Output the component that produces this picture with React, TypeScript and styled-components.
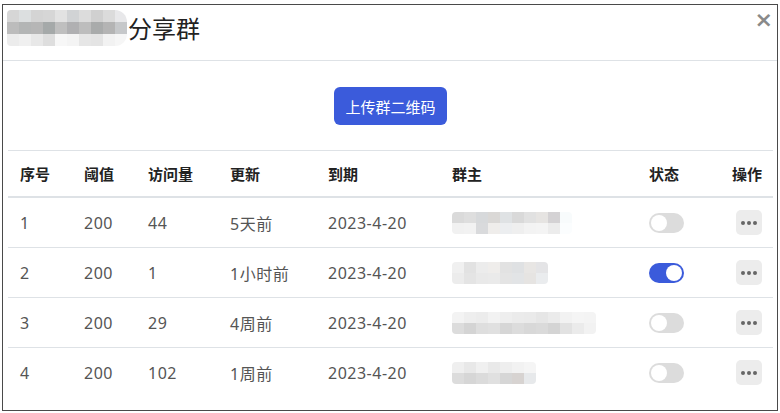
import React from 'react';
import styled, { createGlobalStyle } from 'styled-components';

const GlobalStyle = createGlobalStyle`
	html, body {
		margin: 0;
		padding: 0;
		background: #fff;
	}
	body {
		font-family: "Noto Sans", "Noto Sans CJK SC", sans-serif;
	}
`;

type Row = {
	id: number;
	threshold: number;
	visits: number;
	updated: string;
	expires: string;
	on: boolean;
	owner: string[][];
};

const rows: Row[] = [
	{
		id: 1,
		threshold: 200,
		visits: 44,
		updated: '5天前',
		expires: '2023-4-20',
		on: false,
		owner: [
			['#dadada', '#dedede', '#d7d9db', '#dad8d6', '#dfe2e4', '#d9d9d9', '#e1e1e1', '#e6e4e2', '#d4d2d4', '#f8fbfc'],
			['#f1f1f1', '#f2f2f2', '#d9dadc', '#efedeb', '#eceef0', '#efefef', '#f3f3f3', '#f4f4f4', '#ececec', '#fbfdfe'],
		],
	},
	{
		id: 2,
		threshold: 200,
		visits: 1,
		updated: '1小时前',
		expires: '2023-4-20',
		on: true,
		owner: [
			['#f0f0f0', '#e2e2e2', '#ececec', '#efedeb', '#e2e2e2', '#dfe1e3', '#e8e6e4', '#e4e4e6'],
			['#ececec', '#e4e4e4', '#e9e9e9', '#eaeaea', '#e4e4e4', '#e2e4e6', '#e6e4e2', '#eaecee'],
		],
	},
	{
		id: 3,
		threshold: 200,
		visits: 29,
		updated: '4周前',
		expires: '2023-4-20',
		on: false,
		owner: [
			['#f3f3f3', '#eeeeee', '#ececec', '#f2f2f2', '#eeeeee', '#ebebeb', '#eaeaea', '#e6e6e6', '#ebebeb', '#f2f2f2', '#f5f5f5', '#f4f4f4'],
			['#dcdcdc', '#d4d4d4', '#dedede', '#e0e0e0', '#d6d6d6', '#dcdcdc', '#d8d8d8', '#dadada', '#d4d4d4', '#e2e2e2', '#ebebeb', '#f2f2f2'],
		],
	},
	{
		id: 4,
		threshold: 200,
		visits: 102,
		updated: '1周前',
		expires: '2023-4-20',
		on: false,
		owner: [
			['#efefef', '#e8e8e8', '#f0f0f0', '#e9e9e9', '#eeeeee', '#f2f2f2', '#f5f5f5'],
			['#dcdcdc', '#d6d6d6', '#dbdbdb', '#e0e0e0', '#d6d6d6', '#d7d3d1', '#e7e9eb'],
		],
	},
];

const titleMosaic = [
	['#d6d6d6', '#dcdfe0', '#d4d4d4', '#d6d6d6', '#e2e2e2', '#d1d3d5', '#dcdcdc', '#d0d0d0', '#dbdbdb', '#e8e8ea'],
	['#bcbcbc', '#b3b5b5', '#b6b6b6', '#a5a9a9', '#bfbfbf', '#b0b0b2', '#bdbdbd', '#a9abab', '#b4b4b4', '#c6c8ca'],
	['#ececec', '#f0f0f0', '#e8e8e8', '#dedede', '#f7f7f7', '#f4f4f4', '#e6e6e6', '#e4e4e4', '#f2f2f2', '#f6f6f6'],
];

const Mosaic: React.FC<{ cells: string[][]; size: number; height: number }> = ({ cells, size, height }) => (
	<MosaicGrid>
		{cells.map((line, r) => (
			<MosaicLine key={r}>
				{line.map((c, i) => (
					<Cell key={i} $w={size} $h={height} style={{ background: c }} />
				))}
			</MosaicLine>
		))}
	</MosaicGrid>
);

const App: React.FC = () => {
	return (
		<>
			<GlobalStyle />
			<Modal>
				<Header>
					<TitleMosaic>
						<Mosaic cells={titleMosaic} size={12} height={12} />
					</TitleMosaic>
					<Title>分享群</Title>
					<Close>×</Close>
				</Header>
				<Body>
					<UploadButton>上传群二维码</UploadButton>
					<Table>
						<colgroup>
							<col style={{ width: 64 }} />
							<col style={{ width: 64 }} />
							<col style={{ width: 82 }} />
							<col style={{ width: 98 }} />
							<col style={{ width: 124 }} />
							<col style={{ width: 197 }} />
							<col style={{ width: 83 }} />
							<col />
						</colgroup>
						<thead>
							<tr>
								<Th>序号</Th>
								<Th>阈值</Th>
								<Th>访问量</Th>
								<Th>更新</Th>
								<Th>到期</Th>
								<Th>群主</Th>
								<Th>状态</Th>
								<Th>操作</Th>
							</tr>
						</thead>
						<tbody>
							{rows.map((row) => (
								<Tr key={row.id}>
									<Td>{row.id}</Td>
									<Td>{row.threshold}</Td>
									<Td>{row.visits}</Td>
									<Td>{row.updated}</Td>
									<Td>{row.expires}</Td>
									<Td>
										<Mosaic cells={row.owner} size={12} height={11} />
									</Td>
									<Td>
										<Switch $on={row.on} />
									</Td>
									<Td>
										<MoreButton>
											<Dot />
											<Dot />
											<Dot />
										</MoreButton>
									</Td>
								</Tr>
							))}
						</tbody>
					</Table>
				</Body>
			</Modal>
		</>
	);
};

const Modal = styled.div`
	box-sizing: border-box;
	margin: 4px 2px 0 2px;
	width: 776px;
	height: 407px;
	border: 1px solid #4a4a4a;
	background: #fff;
	overflow: hidden;
`;

const Header = styled.div`
	box-sizing: border-box;
	display: flex;
	align-items: center;
	height: 56px;
	padding: 0 12px 9px 4px;
	border-bottom: 1px solid #dee2e6;
	position: relative;
`;

const TitleMosaic = styled.div`
	border-radius: 0 12px 12px 0;
	overflow: hidden;
	filter: blur(0.4px);
`;

const Title = styled.div`
	margin-left: 1px;
	font-family: "Noto Sans CJK SC", sans-serif;
	font-size: 24px;
	color: #222;
	line-height: 1;
`;

const Close = styled.div`
	position: absolute;
	right: 4px;
	top: 2px;
	font-family: "DejaVu Sans", sans-serif;
	font-size: 22px;
	font-weight: bold;
	color: #8a8a8a;
`;

const Body = styled.div`
	display: flex;
	flex-direction: column;
	align-items: center;
	padding: 26px 4px 0 5px;
`;

const UploadButton = styled.button`
	height: 38px;
	padding: 0 11px;
	border: none;
	border-radius: 6px;
	background: #3b5bdb;
	color: #fff;
	font-family: "Noto Sans CJK SC", sans-serif;
	font-size: 15px;
	cursor: pointer;
`;

const Table = styled.table`
	margin-top: 25px;
	width: 765px;
	border-collapse: collapse;
	table-layout: fixed;
	border-top: 1px solid #dee2e6;
	font-family: "Noto Sans", "Noto Sans CJK SC", sans-serif;
`;

const Th = styled.th`
	height: 45px;
	padding: 0 12px;
	text-align: left;
	font-family: "Noto Sans CJK SC", sans-serif;
	font-size: 15px;
	font-weight: bold;
	color: #222;
	border-bottom: 2px solid #dee2e6;
	white-space: nowrap;
`;

const Tr = styled.tr`
	border-bottom: 1px solid #dee2e6;
	&:last-child {
		border-bottom: none;
	}
`;

const Td = styled.td`
	height: 49px;
	padding: 0 12px;
	font-size: 16px;
	letter-spacing: 0.5px;
	color: #555;
	white-space: nowrap;
	vertical-align: middle;
`;

const MosaicGrid = styled.div`
	display: inline-flex;
	flex-direction: column;
	vertical-align: middle;
	border-radius: 4px;
	overflow: hidden;
`;

const MosaicLine = styled.div`
	display: flex;
`;

const Cell = styled.div<{ $w: number; $h: number }>`
	width: ${(p) => p.$w}px;
	height: ${(p) => p.$h}px;
`;

const Switch = styled.div<{ $on: boolean }>`
	position: relative;
	width: 35px;
	height: 20px;
	border-radius: 10px;
	background: ${(p) => (p.$on ? '#3b5bdb' : '#dcdcdc')};
	&::after {
		content: '';
		position: absolute;
		top: 2px;
		left: ${(p) => (p.$on ? '17px' : '2px')};
		width: 16px;
		height: 16px;
		border-radius: 50%;
		background: #fff;
	}
`;

const MoreButton = styled.div`
	display: flex;
	align-items: center;
	justify-content: center;
	gap: 2px;
	width: 26px;
	height: 25px;
	margin-left: 4px;
	border-radius: 5px;
	background: #ececec;
`;

const Dot = styled.span`
	width: 4px;
	height: 4px;
	border-radius: 50%;
	background: #666;
`;

export default App;
